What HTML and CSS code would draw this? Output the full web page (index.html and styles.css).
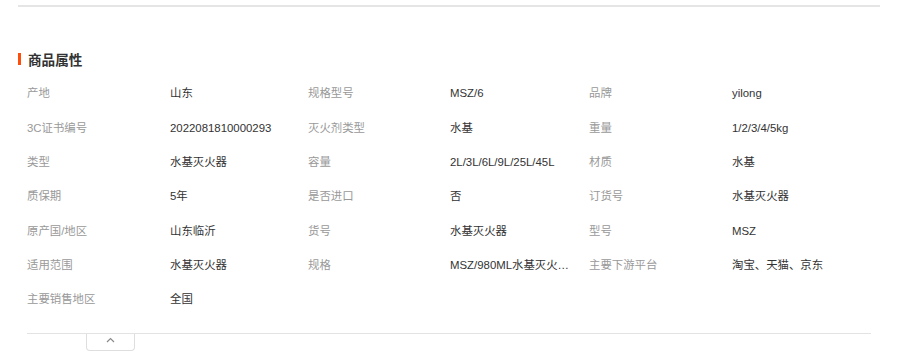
FILE: index.html
```html
<!DOCTYPE html>
<html lang="zh-CN">
<head>
<meta charset="utf-8">
<title>商品属性</title>
<link rel="stylesheet" href="styles.css">
</head>
<body>
<div class="topline"></div>
<section class="attrs">
  <h2 class="title"><span class="bar"></span>商品属性</h2>
  <div class="grid">
    <div class="lbl">产地</div><div class="val">山东</div>
    <div class="lbl">规格型号</div><div class="val">MSZ/6</div>
    <div class="lbl">品牌</div><div class="val">yilong</div>

    <div class="lbl">3C证书编号</div><div class="val">2022081810000293</div>
    <div class="lbl">灭火剂类型</div><div class="val">水基</div>
    <div class="lbl">重量</div><div class="val">1/2/3/4/5kg</div>

    <div class="lbl">类型</div><div class="val">水基灭火器</div>
    <div class="lbl">容量</div><div class="val">2L/3L/6L/9L/25L/45L</div>
    <div class="lbl">材质</div><div class="val">水基</div>

    <div class="lbl">质保期</div><div class="val">5年</div>
    <div class="lbl">是否进口</div><div class="val">否</div>
    <div class="lbl">订货号</div><div class="val">水基灭火器</div>

    <div class="lbl">原产国/地区</div><div class="val">山东临沂</div>
    <div class="lbl">货号</div><div class="val">水基灭火器</div>
    <div class="lbl">型号</div><div class="val">MSZ</div>

    <div class="lbl">适用范围</div><div class="val">水基灭火器</div>
    <div class="lbl">规格</div><div class="val"><span class="ell">MSZ/980ML水基灭火器灭火器</span></div>
    <div class="lbl">主要下游平台</div><div class="val">淘宝、天猫、京东</div>

    <div class="lbl">主要销售地区</div><div class="val">全国</div>
  </div>
  <div class="bottom">
    <button class="fold" type="button" aria-label="收起">
      <svg width="9" height="6" viewBox="0 0 9 6"><polyline points="1,5 4.5,1.5 8,5" fill="none" stroke="#8a8a8a" stroke-width="1.2"/></svg>
    </button>
  </div>
</section>
</body>
</html>
```

FILE: styles.css
```css
html, body {
  margin: 0;
  padding: 0;
  background: #fff;
}
body {
  font-family: "Liberation Sans", "Noto Sans CJK SC", sans-serif;
  font-size: 11.4px;
  color: #333;
}
.topline {
  height: 2px;
  background: #e5e5e5;
  margin: 5px 24px 0 18px;
}
.attrs {
  padding-left: 18px;
}
.title {
  margin: 42px 0 0 0;
  height: 20px;
  line-height: 20px;
  font-size: 13.6px;
  font-weight: bold;
  color: #333;
  font-family: "Noto Sans CJK SC", sans-serif;
  display: flex;
  align-items: center;
}
.bar {
  width: 3px;
  height: 12px;
  background: #ff4d0a;
  margin-right: 7px;
}
.grid {
  margin: 7px 0 0 9px;
  display: grid;
  grid-template-columns: 143px 138px 142px 139px 143px 139px;
  grid-auto-rows: 34.35px;
  align-items: center;
  width: 844px;
}
.lbl {
  color: #999;
  line-height: 16px;
  white-space: nowrap;
}
.val {
  color: #333;
  line-height: 16px;
  white-space: nowrap;
}
.ell {
  display: block;
  max-width: 122px;
  overflow: hidden;
  text-overflow: ellipsis;
  white-space: nowrap;
}
.bottom {
  box-sizing: border-box;
  margin: 17px 0 0 9px;
  width: 844px;
  border-top: 1px solid #e3e3e3;
  padding-left: 59px;
}
.fold {
  display: flex;
  align-items: flex-start;
  justify-content: center;
  width: 49px;
  height: 17px;
  padding: 3px 0 0 0;
  margin: 0;
  background: #fff;
  border: 1px solid #dedede;
  border-top: none;
  border-radius: 0 0 4px 4px;
}
```
